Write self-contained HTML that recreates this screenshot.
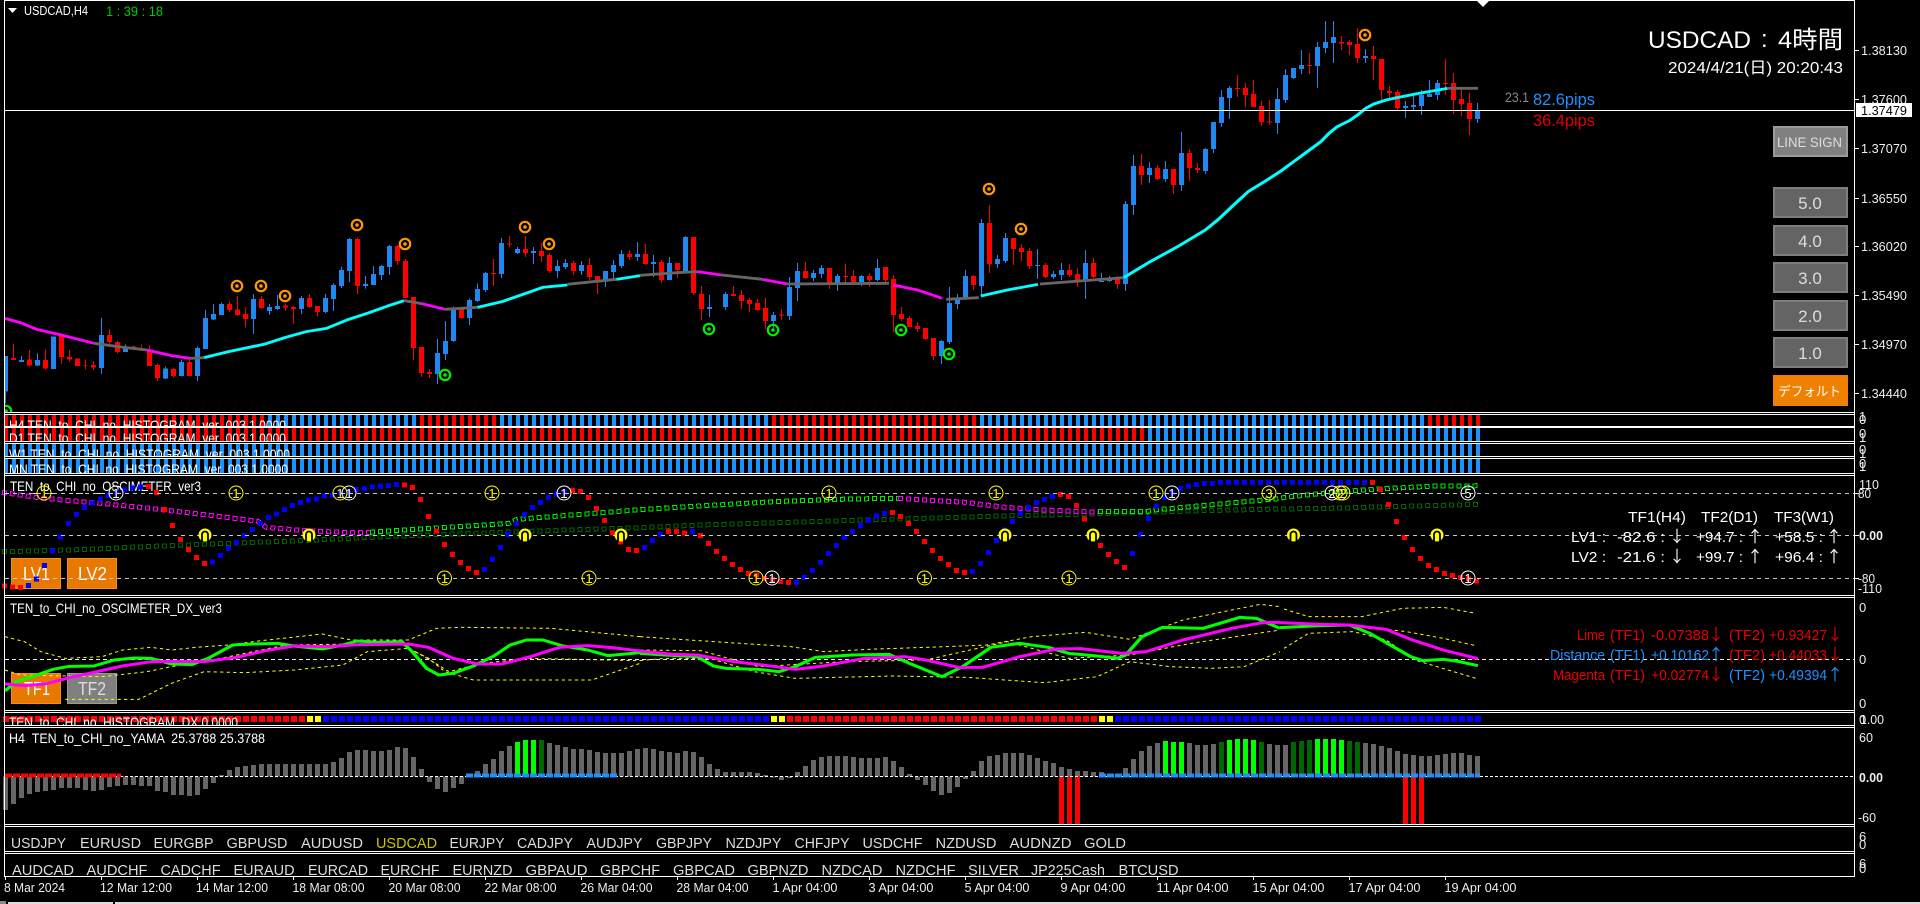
<!DOCTYPE html>
<html><head><meta charset="utf-8"><title>USDCAD H4</title>
<style>
html,body{margin:0;padding:0;background:#000;width:1920px;height:904px;overflow:hidden}
svg{display:block}
text{font-family:"Liberation Sans","Noto Sans CJK JP",sans-serif;fill:#fff;font-size:13px;white-space:pre}
.n{fill:none}
.c{shape-rendering:crispEdges;fill:none}
.sy{font-size:15px;fill:#ddd}
.big{font-size:15px}
.r{fill:#e80000;font-size:15px}
.b{fill:#1e90ff;font-size:15px}
.ar{font-size:16px;text-anchor:middle;font-family:"Noto Sans CJK JP",sans-serif}
.a{font-size:16px;text-anchor:middle;font-family:"Noto Sans CJK JP",sans-serif}
.ax{fill:#eee}
.y{fill:none;stroke:#ff0;stroke-width:3;stroke-dasharray:8 8}
.g{fill:none;stroke:#0f0;stroke-width:9;stroke-linejoin:round}
.m{fill:none;stroke:#f0f;stroke-width:9;stroke-linejoin:round}
.l{fill:none;stroke-width:8.5;stroke-linejoin:round}
.d{font-size:13px;text-anchor:middle}
.bt{font-size:17px;text-anchor:middle;fill:#ddd}
.ho{fill:none;stroke-width:5;stroke-dasharray:5 3}
.hi{fill:none;stroke:#000;stroke-width:3;stroke-dasharray:3 5;stroke-dashoffset:-1}
</style></head><body>
<svg xmlns="http://www.w3.org/2000/svg" width="1920" height="904" viewBox="0 0 1920 904">
<defs>
<clipPath id="cm"><rect x="5" y="1" width="1849" height="411"/></clipPath>
<clipPath id="c1"><rect x="5" y="415" width="1849" height="11"/></clipPath>
<clipPath id="c2"><rect x="5" y="428" width="1849" height="13"/></clipPath>
<clipPath id="c3"><rect x="5" y="444" width="1849" height="12"/></clipPath>
<clipPath id="c4"><rect x="5" y="459" width="1849" height="14"/></clipPath>
<clipPath id="c5"><rect x="5" y="713" width="1849" height="12"/></clipPath>
<g id="o"><circle r="5.200" fill="none" stroke="#f90" stroke-width="2.200"/><circle r="1.800" fill="#f90"/></g>
<g id="e"><circle r="5.200" fill="none" stroke="#0e0" stroke-width="2.200"/><circle r="1.800" fill="#0e0"/></g>
<g id="h"><circle r="6.500" fill="#ff0"/><path d="M-3 7V-.5a3 3 0 0 1 6 0V7" fill="none" stroke="#000" stroke-width="1.800"/></g>
</defs>

<!-- Candles -->
<g clip-path="url(#cm)">
<g class="c" transform="translate(.5 0) scale(1 .33333)">
<path stroke="#1e88f0" stroke-width="1" d="M5 1068V1210M21 1068V1086M37 1060V1098M53 1010V1108M101 954V1122M125 1033V1056M165 1100V1137M181 1080V1130M197 1040V1143M205 930V1047M213 912V960M221 908V945M253 882V1002M269 912V945M277 885V930M301 888V942M325 882V939M333 850V933M341 800V864M349 714V846M365 828V866M373 798V855M381 795V840M389 735V825M437 1017V1152M445 963V1080M453 920V1026M469 896V975M477 850V906M485 816V876M501 714V834M517 741V762M533 741V792M557 780V834M565 777V807M581 783V825M605 813V861M613 780V840M621 750V804M637 726V783M653 765V831M669 771V840M685 708V813M709 885V951M725 876V930M773 936V990M789 831V960M797 789V903M813 810V843M821 795V834M837 822V873M861 825V858M877 777V843M941 1020V1092M949 861V1032M957 882V927M965 810V897M981 657V888M997 765V804M1005 699V789M1037 747V837M1053 813V837M1061 789V840M1085 750V897M1101 819V846M1109 828V846M1125 603V873M1133 465V645M1149 486V549M1165 483V546M1181 396V573M1205 444V522M1213 366V459M1221 270V381M1229 258V357M1277 264V402M1285 207V309M1293 204V237M1301 150V222M1317 126V264M1325 63V159M1333 63V189M1365 147V189M1405 303V354M1413 288V333M1421 270V345M1429 240V291M1437 240V300M1477 309V369"/>
<path stroke="#1e88f0" stroke-width="5" d="M5 1068V1175M21 1080V1086M37 1080V1096M53 1010V1107M101 1005V1104M125 1040V1056M165 1106V1135M181 1086V1128M197 1044V1128M205 954V1047M213 942V958M221 912V945M253 897V957M269 921V933M277 918V927M301 894V927M325 894V936M333 855V897M341 810V858M349 717V813M365 852V858M373 822V855M381 798V825M389 738V801M437 1059V1122M445 1023V1062M453 924V1023M469 900V954M477 867V903M485 819V870M501 729V822M517 747V759M533 753V759M557 798V813M565 789V801M581 795V813M605 813V840M613 795V816M621 762V798M637 762V771M653 786V792M669 789V840M685 711V813M709 921V927M725 882V921M773 945V963M789 861V948M797 813V864M813 819V834M821 804V822M837 828V852M861 828V846M877 804V840M941 1023V1068M949 909V1026M957 894V912M965 828V897M981 669V858M997 777V792M1005 714V783M1037 795V798M1053 822V831M1061 810V825M1085 789V840M1101 843V846M1109 834V843M1125 612V852M1133 498V615M1149 504V525M1165 507V537M1181 459V555M1205 447V513M1213 366V447M1221 291V369M1229 264V294M1277 297V369M1285 225V300M1293 204V234M1301 195V207M1317 141V198M1325 126V144M1333 111V129M1365 168V174M1405 318V324M1413 315V321M1421 285V318M1429 282V291M1437 249V285M1477 330V357"/>
<path stroke="#f00" stroke-width="1" d="M13 1032V1080M29 1050V1100M45 1048V1110M61 1000V1092M69 1050V1085M85 1078V1108M93 1083V1110M109 988V1040M117 1022V1060M133 1036V1050M141 1033V1052M149 1035V1098M157 1090V1143M173 1103V1132M189 1076V1130M229 905V936M237 888V948M245 924V982M261 888V927M285 910V933M293 918V972M309 882V924M317 918V950M357 712V882M397 735V795M405 777V894M413 891V1080M421 1041V1131M429 1107V1134M461 921V957M493 777V858M509 708V741M525 708V771M541 729V786M549 759V819M573 783V825M589 774V840M597 828V882M629 750V780M645 732V795M661 780V849M677 789V834M693 711V885M701 858V960M733 858V890M741 870V927M749 894V936M757 897V933M765 894V987M781 927V960M805 786V837M829 804V867M845 792V852M853 810V852M869 819V861M885 801V855M893 825V996M901 921V963M909 948V981M917 966V996M925 984V1020M933 1014V1080M973 825V870M989 615V819M1013 714V795M1021 732V783M1029 744V807M1045 789V834M1069 792V831M1077 804V861M1093 774V834M1117 828V867M1141 462V555M1157 495V540M1173 507V582M1189 447V543M1197 489V519M1237 225V291M1245 249V321M1253 240V321M1261 303V378M1269 300V375M1309 159V222M1341 108V150M1349 120V165M1357 84V189M1373 138V240M1381 177V300M1389 258V294M1397 270V333M1445 177V285M1453 219V342M1461 264V348M1469 279V405"/>
<path stroke="#f00" stroke-width="5" d="M13 1074V1080M29 1078V1096M45 1080V1106M61 1008V1071M69 1071V1078M77 1075V1098M85 1096V1098M93 1095V1103M109 1005V1026M117 1026V1056M133 1040V1046M141 1045V1050M149 1050V1098M157 1095V1134M173 1107V1128M189 1086V1128M229 912V930M237 928V945M245 942V957M261 897V924M285 917V923M293 921V927M309 894V921M317 918V936M357 717V858M397 738V783M405 783V894M413 891V1044M421 1041V1119M429 1116V1122M461 921V954M493 819V822M509 730V733M525 747V759M541 753V768M549 765V813M573 789V813M589 795V831M597 828V840M629 762V771M645 762V792M661 786V840M677 789V810M693 711V879M701 882V927M733 882V888M741 885V903M749 900V912M757 909V930M765 924V963M781 944V947M805 813V834M829 804V852M845 828V831M853 828V846M869 828V840M885 801V840M893 837V945M901 942V957M909 954V981M917 978V987M925 984V1017M933 1014V1068M973 828V855M989 669V792M1013 714V747M1021 744V756M1029 753V798M1045 795V831M1069 810V825M1077 822V840M1093 789V831M1117 831V852M1141 498V525M1157 504V537M1173 507V555M1189 459V504M1197 504V510M1237 264V267M1245 264V285M1253 282V321M1261 318V366M1269 364V367M1309 195V198M1341 126V131M1349 126V135M1357 132V174M1373 168V177M1381 177V270M1389 273V279M1397 276V324M1445 249V252M1453 249V300M1461 297V312M1469 309V357"/>
</g>
<!-- Moving average -->
<g transform="scale(.40816 .33333)">
<path class="l" stroke="#f0f" d="M12 955L50 968L90 988L150 1005L230 1030"/>
<path class="l" stroke="#666" d="M230 1030L290 1040L360 1050"/>
<path class="l" stroke="#f0f" d="M360 1050L420 1067L465 1075"/>
<path class="l" stroke="#666" d="M465 1075L500 1073"/>
<path class="l" stroke="#0ff" d="M500 1073L560 1055L650 1032L700 1012L750 995L800 985L850 960L900 940L950 918L990 902"/>
<path class="l" stroke="#666" d="M990 902L1030 910"/>
<path class="l" stroke="#f0f" d="M1030 910L1090 928"/>
<path class="l" stroke="#666" d="M1090 928L1170 922"/>
<path class="l" stroke="#0ff" d="M1170 922L1230 905L1300 875L1330 862L1390 855"/>
<path class="l" stroke="#666" d="M1390 853L1510 838"/>
<path class="l" stroke="#0ff" d="M1510 838L1568 827"/>
</g>
<g transform="translate(640 0) scale(.40816 .33333)">
<path class="l" stroke="#666" d="M0 826L90 818L140 815"/>
<path class="l" stroke="#f0f" d="M140 815L200 825"/>
<path class="l" stroke="#666" d="M200 825L300 838"/>
<path class="l" stroke="#f0f" d="M300 838L360 852"/>
<path class="l" stroke="#666" d="M360 852L610 850"/>
<path class="l" stroke="#f0f" d="M620 855L680 870L740 895"/>
<path class="l" stroke="#666" d="M750 898L830 893"/>
<path class="l" stroke="#0ff" d="M835 888L900 870L975 853"/>
<path class="l" stroke="#666" d="M980 852L1185 833"/>
<path class="l" stroke="#0ff" d="M1185 833L1250 785L1320 738L1385 690L1420 655L1450 620L1490 575L1530 545L1568 515"/>
</g>
<g transform="translate(1280 0) scale(.40816 .33333)">
<path class="l" stroke="#0ff" d="M0 515L50 470L100 425L120 400L140 380L170 362L190 345L210 325L230 312L260 300L290 292L340 280L410 265"/>
<path class="l" stroke="#666" d="M410 265L485 265"/>
</g>
<!-- signal rings -->
<use href="#o" x="237" y="286"/><use href="#o" x="261" y="286"/><use href="#o" x="285" y="296"/><use href="#o" x="357" y="225"/><use href="#o" x="405" y="244"/><use href="#o" x="525" y="227"/><use href="#o" x="549" y="244"/><use href="#o" x="989" y="189"/><use href="#o" x="1021" y="229"/><use href="#o" x="1365" y="35"/>
<use href="#e" x="445" y="375"/><use href="#e" x="6" y="411"/><use href="#e" x="709" y="329"/><use href="#e" x="773" y="330"/><use href="#e" x="901" y="330"/><use href="#e" x="949" y="354"/>
<path class="c" stroke="#fff" d="M5 110.500H1854"/>
<path d="M1477 1H1489L1483 7Z" fill="#fff"/>
</g>

<!-- Main chart labels -->
<path d="M8 8H17L12.500 13Z" fill="#fff"/>
<text x="24" y="15" textLength="64" lengthAdjust="spacingAndGlyphs">USDCAD,H4</text>
<text x="106" y="16" textLength="57" lengthAdjust="spacingAndGlyphs" style="fill:#0c0;font-size:14px">1 : 39 : 18</text>
<text x="1648" y="48" textLength="103" lengthAdjust="spacingAndGlyphs" style="font-size:24px">USDCAD</text>
<text x="1761" y="47" style="font-size:24px">:</text>
<text x="1778" y="48" textLength="65" lengthAdjust="spacingAndGlyphs" style="font-size:24px">4時間</text>
<text x="1668" y="73" textLength="175" lengthAdjust="spacingAndGlyphs" style="font-size:16px">2024/4/21(日) 20:20:43</text>
<text x="1505" y="102" textLength="24" lengthAdjust="spacingAndGlyphs" style="fill:#888;font-size:14px">23.1</text>
<text x="1533" y="105" textLength="62" lengthAdjust="spacingAndGlyphs" style="fill:#1e90ff;font-size:17px">82.6pips</text>
<text x="1533" y="126" textLength="62" lengthAdjust="spacingAndGlyphs" style="fill:#e00000;font-size:17px">36.4pips</text>

<!-- Buttons -->
<g class="c" style="fill:none">
<rect x="1773" y="126" width="75" height="31" fill="#9a9a9a"/><rect x="1775" y="128" width="71" height="27" fill="#808080"/>
<rect x="1773" y="187" width="75" height="31" fill="#7e7e7e"/><rect x="1775" y="189" width="71" height="27" fill="#646464"/>
<rect x="1773" y="225" width="75" height="31" fill="#7e7e7e"/><rect x="1775" y="227" width="71" height="27" fill="#646464"/>
<rect x="1773" y="262" width="75" height="31" fill="#7e7e7e"/><rect x="1775" y="264" width="71" height="27" fill="#646464"/>
<rect x="1773" y="300" width="75" height="31" fill="#7e7e7e"/><rect x="1775" y="302" width="71" height="27" fill="#646464"/>
<rect x="1773" y="337" width="75" height="31" fill="#7e7e7e"/><rect x="1775" y="339" width="71" height="27" fill="#646464"/>
<rect x="1773" y="375" width="75" height="31" fill="#f08000"/>
</g>
<text x="1777" y="147" textLength="65" lengthAdjust="spacingAndGlyphs" style="fill:#ddd;font-size:14px">LINE SIGN</text>
<text x="1810" y="209" class="bt">5.0</text><text x="1810" y="247" class="bt">4.0</text><text x="1810" y="284" class="bt">3.0</text><text x="1810" y="322" class="bt">2.0</text><text x="1810" y="359" class="bt">1.0</text>
<text x="1778" y="396" textLength="63" lengthAdjust="spacingAndGlyphs" style="fill:#fff;font-size:13px">デフォルト</text>

<!-- Histogram rows -->
<g class="c" stroke-dasharray="4 4">
<g stroke-width="11">
<path stroke="#f00" d="M4 420.500H268M420 420.500H500M772 420.500H980M1428 420.500H1484"/>
<path stroke="#1e90ff" d="M268 420.500H420M500 420.500H772M980 420.500H1428"/>
</g>
<g stroke-width="13">
<path stroke="#f00" d="M4 434.500H1148"/>
<path stroke="#1e90ff" d="M1148 434.500H1484"/>
</g>
<path stroke="#1e90ff" stroke-width="12" d="M4 450H1484"/>
<path stroke="#1e90ff" stroke-width="14" d="M4 466H1484"/>
</g>
<g clip-path="url(#c1)"><text x="9" y="430" textLength="277" lengthAdjust="spacingAndGlyphs" style="font-size:14px">H4 TEN_to_CHI_no_HISTOGRAM_ver_003 1.0000</text></g>
<g clip-path="url(#c2)"><text x="9" y="443" textLength="277" lengthAdjust="spacingAndGlyphs" style="font-size:14px">D1 TEN_to_CHI_no_HISTOGRAM_ver_003 1.0000</text></g>
<g clip-path="url(#c3)"><text x="9" y="459" textLength="281" lengthAdjust="spacingAndGlyphs" style="font-size:14px">W1 TEN_to_CHI_no_HISTOGRAM_ver_003 1.0000</text></g>
<g clip-path="url(#c4)"><text x="9" y="474" textLength="279" lengthAdjust="spacingAndGlyphs" style="font-size:14px">MN TEN_to_CHI_no_HISTOGRAM_ver_003 1.0000</text></g>

<!-- Oscimeter panel -->
<rect x="11" y="558" width="50" height="31" style="fill:#f59020" class="c"/><rect x="12" y="559" width="48" height="29" style="fill:#e87800" class="c"/>
<rect x="67" y="558" width="50" height="31" style="fill:#f59020" class="c"/><rect x="68" y="559" width="48" height="29" style="fill:#e87800" class="c"/>
<text x="23" y="580" textLength="27" lengthAdjust="spacingAndGlyphs" style="font-size:18px">LV1</text>
<text x="78" y="580" textLength="29" lengthAdjust="spacingAndGlyphs" style="font-size:18px">LV2</text>
<text x="10" y="491" textLength="191" lengthAdjust="spacingAndGlyphs" style="font-size:14px">TEN_to_CHI_no_OSCIMETER_ver3</text>
<g class="c">
<path class="ho" stroke="#060" d="M2 551.700L45 550.700L90 549.300L130 547.300L210 544L300 540.700L400 536L490 532.700L560 530.300L640 527.700L700 525L800 522L900 519L1000 516L1100 513.700L1200 510.700L1280 509L1330 508.300L1480 504.300"/>
<path class="hi" d="M2 551.700L45 550.700L90 549.300L130 547.300L210 544L300 540.700L400 536L490 532.700L560 530.300L640 527.700L700 525L800 522L900 519L1000 516L1100 513.700L1200 510.700L1280 509L1330 508.300L1480 504.300"/>
<path class="ho" stroke="#f0f" d="M2 492.300L40 498L100 503.300L150 508.300L210 515.300L258 521.300L266 527.300L300 530.300L340 532.300L370 532.700"/>
<path class="hi" d="M2 492.300L40 498L100 503.300L150 508.300L210 515.300L258 521.300L266 527.300L300 530.300L340 532.300L370 532.700"/>
<path class="ho" stroke="#0e0" d="M370 532.300L509 523.300L517 519.300L645 509.300L773 501.700L850 499L898 498.300"/>
<path class="hi" d="M370 532.300L509 523.300L517 519.300L645 509.300L773 501.700L850 499L898 498.300"/>
<path class="ho" stroke="#f0f" d="M898 498.300L965 502.300L1005 507.300L1045 510L1098 512.300"/>
<path class="hi" d="M898 498.300L965 502.300L1005 507.300L1045 510L1098 512.300"/>
<path class="ho" stroke="#0e0" d="M1098 511.700L1146 511.700L1154 510L1278 498.700L1285 497.300L1333 492.300L1373 489.300L1429 486.300L1480 485.700"/>
<path class="hi" d="M1098 511.700L1146 511.700L1154 510L1278 498.700L1285 497.300L1333 492.300L1373 489.300L1429 486.300L1480 485.700"/>
</g>
<g class="c" transform="translate(-.5 410) scale(1 .33333)">
<path stroke="#00f" stroke-width="5" d="M29 519v15M37 499v15M45 459v15M53 415v15M61 373v15M69 333v15M77 306v15M85 285v15M93 271v15M101 260v15M109 249v15M117 239v15M125 233v15M133 227v15M141 223v15M213 448v15M221 429v15M229 408v15M237 390v15M245 369v15M253 351v15M261 333v15M269 315v15M277 304v15M285 291v15M293 279v15M301 270v15M309 263v15M317 259v15M325 251v15M333 247v15M341 240v15M349 238v15M357 231v15M365 228v15M373 223v15M381 220v15M389 219v15M397 216v15M485 471v15M493 441v15M501 405v15M509 366v15M517 333v15M525 306v15M533 285v15M541 270v15M549 255v15M557 245v15M565 238v15M645 405v15M653 384v15M661 366v15M693 357v15M797 510v15M805 495v15M813 474v15M821 450v15M829 423v15M837 399v15M845 375v15M853 357v15M861 339v15M869 324v15M877 311v15M885 303v15M973 477v15M981 453v15M989 420v15M997 384v15M1005 353v15M1013 327v15M1021 303v15M1029 285v15M1037 270v15M1045 261v15M1053 252v15M1133 423v15M1141 366v15M1149 318v15M1157 281v15M1165 255v15M1173 240v15M1181 228v15M1189 221v15M1197 216v15M1205 213v15M1213 213v15"/>
<path stroke="#00f" stroke-width="15" stroke-dasharray="5 3" d="M1218.500 217H1368"/>
<path stroke="#f00" stroke-width="5" d="M5 520v15M13 523v15M21 525v15M149 222v15M157 240v15M165 291v15M173 339v15M181 381v15M189 411v15M197 435v15M205 453v15M405 217v15M413 225v15M421 261v15M429 312v15M437 356v15M445 396v15M453 426v15M461 450v15M469 468v15M477 480v15M573 234v15M581 237v15M589 255v15M597 288v15M605 324v15M613 362v15M621 388v15M629 411v15M637 414v15M669 357v15M677 357v15M685 362v15M701 369v15M709 393v15M717 417v15M725 438v15M733 456v15M741 471v15M749 483v15M757 488v15M765 498v15M773 501v15M781 507v15M789 510v15M893 300v15M901 312v15M909 333v15M917 357v15M925 387v15M933 414v15M941 438v15M949 456v15M957 474v15M965 480v15M1061 246v15M1069 252v15M1077 279v15M1085 320v15M1093 362v15M1101 399v15M1109 426v15M1117 447v15M1125 465v15M1373 210v15M1381 231v15M1389 276v15M1397 327v15M1405 375v15M1413 411v15M1421 438v15M1429 459v15M1437 471v15M1445 483v15M1453 489v15M1461 495v15M1469 500v15M1477 506v15"/>
</g>
<path class="c" stroke="#c8c8c8" stroke-dasharray="4 4" d="M5 493.500H1854M5 535.500H1854M5 578.500H1854"/>
<g fill="none" stroke="#ff0">
<circle cx="44" cy="493" r="7"/><circle cx="236" cy="493" r="7"/><circle cx="340" cy="493" r="7"/><circle cx="492" cy="493" r="7"/><circle cx="829" cy="493" r="7"/><circle cx="996" cy="493" r="7"/><circle cx="1156" cy="493" r="7"/><circle cx="1269" cy="493" r="7"/><circle cx="1340" cy="493" r="7"/><circle cx="1343" cy="493" r="7"/><circle cx="444.500" cy="578" r="7"/><circle cx="589" cy="578" r="7"/><circle cx="756" cy="578" r="7"/><circle cx="924.500" cy="578" r="7"/><circle cx="1069" cy="578" r="7"/>
</g>
<g fill="none" stroke="#fff">
<circle cx="116" cy="493" r="7"/><circle cx="349" cy="493" r="7"/><circle cx="564" cy="493" r="7"/><circle cx="1172" cy="493" r="7"/><circle cx="1332" cy="493" r="7"/><circle cx="1468" cy="493" r="7"/><circle cx="772" cy="578" r="7"/><circle cx="1468" cy="578" r="7"/>
</g>
<g>
<text class="d" x="44" y="498" style="fill:#ff0">1</text><text class="d" x="236" y="498" style="fill:#ff0">1</text><text class="d" x="340" y="498" style="fill:#ff0">1</text><text class="d" x="492" y="498" style="fill:#ff0">1</text><text class="d" x="829" y="498" style="fill:#ff0">1</text><text class="d" x="996" y="498" style="fill:#ff0">1</text><text class="d" x="1156" y="498" style="fill:#ff0">1</text><text class="d" x="1269" y="498" style="fill:#ff0">3</text><text class="d" x="1340" y="498" style="fill:#ff0">2</text><text class="d" x="1343" y="498" style="fill:#ff0">2</text><text class="d" x="444.500" y="583" style="fill:#ff0">1</text><text class="d" x="589" y="583" style="fill:#ff0">1</text><text class="d" x="756" y="583" style="fill:#ff0">1</text><text class="d" x="924.500" y="583" style="fill:#ff0">1</text><text class="d" x="1069" y="583" style="fill:#ff0">1</text>
</g>
<text class="d" x="116" y="498">1</text><text class="d" x="349" y="498">1</text><text class="d" x="564" y="498">1</text><text class="d" x="1172" y="498">1</text><text class="d" x="1332" y="498">2</text><text class="d" x="1468" y="498">5</text><text class="d" x="772" y="583">1</text><text class="d" x="1468" y="583">1</text>
<use href="#h" x="205" y="535"/><use href="#h" x="309" y="535"/><use href="#h" x="525" y="535"/><use href="#h" x="621" y="535"/><use href="#h" x="1005" y="535"/><use href="#h" x="1093" y="535"/><use href="#h" x="1293.500" y="535"/><use href="#h" x="1437" y="535"/>

<!-- TF table -->
<text class="big" x="1628" y="522" textLength="58" lengthAdjust="spacingAndGlyphs">TF1(H4)</text>
<text class="big" x="1701" y="522" textLength="57" lengthAdjust="spacingAndGlyphs">TF2(D1)</text>
<text class="big" x="1774" y="522" textLength="60" lengthAdjust="spacingAndGlyphs">TF3(W1)</text>
<text class="big" x="1571" y="542" textLength="35" lengthAdjust="spacingAndGlyphs">LV1 :</text>
<text class="big" x="1617" y="542" textLength="48" lengthAdjust="spacingAndGlyphs">-82.6 :</text>
<text class="big" x="1696" y="542" textLength="47" lengthAdjust="spacingAndGlyphs">+94.7 :</text>
<text class="big" x="1775" y="542" textLength="48" lengthAdjust="spacingAndGlyphs">+58.5 :</text>
<text class="ar" x="1677" y="542">↓</text><text class="ar" x="1755" y="542">↑</text><text class="ar" x="1834" y="542">↑</text>
<text class="big" x="1571" y="562" textLength="35" lengthAdjust="spacingAndGlyphs">LV2 :</text>
<text class="big" x="1617" y="562" textLength="48" lengthAdjust="spacingAndGlyphs">-21.6 :</text>
<text class="big" x="1696" y="562" textLength="47" lengthAdjust="spacingAndGlyphs">+99.7 :</text>
<text class="big" x="1775" y="562" textLength="48" lengthAdjust="spacingAndGlyphs">+96.4 :</text>
<text class="ar" x="1677" y="562">↓</text><text class="ar" x="1755" y="562">↑</text><text class="ar" x="1834" y="562">↑</text>

<!-- DX panel -->
<rect x="11" y="673" width="50" height="31" style="fill:#f59020" class="c"/><rect x="12" y="674" width="48" height="29" style="fill:#e87800" class="c"/>
<rect x="67" y="673" width="50" height="31" style="fill:#9a9a9a" class="c"/><rect x="68" y="674" width="48" height="29" style="fill:#808080" class="c"/>
<text x="24" y="695" textLength="26" lengthAdjust="spacingAndGlyphs" style="font-size:18px">TF1</text>
<text x="78" y="695" textLength="28" lengthAdjust="spacingAndGlyphs" style="font-size:18px;fill:#ddd">TF2</text>
<text x="10" y="613" textLength="212" lengthAdjust="spacingAndGlyphs" style="font-size:14px">TEN_to_CHI_no_OSCIMETER_DX_ver3</text>
<path class="c" stroke="#eee" stroke-dasharray="4 3" d="M5 659.500H1854"/>
<g transform="translate(0 410) scale(.40816 .33333)">
<path class="y" d="M12 680L60 695L100 725L160 745L250 740L300 720L370 712L420 720L480 712L560 705L640 692L790 672L860 690L1000 690L1070 655L1130 652L1350 655L1568 680"/>
<path class="y" d="M160 868L340 868L420 820L500 785L600 788L720 780L840 765L900 725L1000 715L1050 745L1090 785L1160 810L1450 810L1568 760"/>
<path class="y" d="M12 780L50 795L250 800L360 785L440 765L520 750L700 705L980 700L1040 740L1100 785L1180 760L1300 745L1568 752"/>
<path class="g" d="M12 843L40 815L90 795L130 778L170 769L230 768L280 750L330 744L370 745L420 762L470 764L510 745L570 705L620 702L680 700L720 708L790 717L840 705L875 693L930 697L985 695L1010 725L1045 775L1075 795L1110 790L1160 768L1210 738L1250 705L1290 690L1330 690L1380 708L1440 720L1490 737L1568 728"/>
<path class="m" d="M12 822L60 827L110 822L170 803L230 787L300 768L370 755L430 754L500 755L580 742L650 722L720 708L800 710L880 704L1000 702L1050 712L1110 745L1170 762L1230 762L1300 740L1370 712L1440 707L1500 713L1568 723"/>
</g>
<g transform="translate(640 410) scale(.40816 .33333)">
<path class="y" d="M0 680L120 690L370 710L450 725L560 718L700 712L850 705L960 680L1090 667L1200 688L1330 630L1450 600L1520 583L1568 590"/>
<path class="y" d="M0 752L60 745L170 745L280 785L380 805L620 798L800 802L990 818L1120 800L1200 755L1300 770L1400 775L1480 770L1568 725"/>
<path class="y" d="M0 720L150 722L290 770L500 755L700 750L900 695L1050 745L1200 735L1350 700L1568 660"/>
<path class="g" d="M0 730L60 735L140 740L180 768L210 775L290 778L340 785L380 770L430 742L520 735L610 733L660 760L740 800L790 770L860 712L930 700L1000 712L1050 730L1120 738L1170 745L1190 735L1230 680L1280 652L1380 655L1470 622L1510 625L1568 655"/>
<path class="m" d="M0 723L80 733L140 735L230 755L300 765L380 778L450 768L550 745L650 740L700 750L780 772L840 772L930 740L1020 717L1080 716L1180 730L1240 725L1330 690L1450 655L1530 637L1568 637"/>
</g>
<g transform="translate(1280 410) scale(.40816 .33333)">
<path class="y" d="M10 597L70 620L200 620L300 595L400 592L480 610"/>
<path class="y" d="M10 715L70 670L180 665L260 690L330 750L480 805"/>
<path class="y" d="M170 645L310 665L400 685L480 707"/>
<path class="g" d="M0 653L100 647L170 645L220 670L270 705L320 740L350 752L400 748L440 755L485 767"/>
<path class="m" d="M0 638L100 643L170 645L260 658L320 688L400 720L485 746"/>
</g>
<text class="r" x="1577" y="640" textLength="28" lengthAdjust="spacingAndGlyphs">Lime</text>
<text class="r" x="1610" y="640" textLength="35" lengthAdjust="spacingAndGlyphs">(TF1)</text>
<text class="r" x="1651" y="640" textLength="58" lengthAdjust="spacingAndGlyphs">-0.07388</text>
<text class="r a" x="1716" y="640">↓</text>
<text class="r" x="1729" y="640" textLength="36" lengthAdjust="spacingAndGlyphs">(TF2)</text>
<text class="r" x="1769" y="640" textLength="58" lengthAdjust="spacingAndGlyphs">+0.93427</text>
<text class="r a" x="1835" y="640">↓</text>
<text class="b" x="1550" y="660" textLength="55" lengthAdjust="spacingAndGlyphs">Distance</text>
<text class="b" x="1610" y="660" textLength="35" lengthAdjust="spacingAndGlyphs">(TF1)</text>
<text class="b" x="1651" y="660" textLength="58" lengthAdjust="spacingAndGlyphs">+0.10162</text>
<text class="b a" x="1716" y="660">↑</text>
<text class="r" x="1729" y="660" textLength="36" lengthAdjust="spacingAndGlyphs">(TF2)</text>
<text class="r" x="1769" y="660" textLength="58" lengthAdjust="spacingAndGlyphs">+0.44033</text>
<text class="r a" x="1835" y="660">↓</text>
<text class="r" x="1553" y="680" textLength="52" lengthAdjust="spacingAndGlyphs">Magenta</text>
<text class="r" x="1610" y="680" textLength="35" lengthAdjust="spacingAndGlyphs">(TF1)</text>
<text class="r" x="1651" y="680" textLength="58" lengthAdjust="spacingAndGlyphs">+0.02774</text>
<text class="r a" x="1716" y="680">↓</text>
<text class="b" x="1729" y="680" textLength="36" lengthAdjust="spacingAndGlyphs">(TF2)</text>
<text class="b" x="1769" y="680" textLength="58" lengthAdjust="spacingAndGlyphs">+0.49394</text>
<text class="b a" x="1835" y="680">↑</text>

<!-- DX histogram row -->
<g class="c" stroke-width="6" stroke-dasharray="6 2">
<path stroke="#f00" d="M3 719H307M787 719H1099"/>
<path stroke="#ff0" d="M307 719H323M771 719H787M1099 719H1115"/>
<path stroke="#00f" d="M323 719H771M1115 719H1483"/>
</g>
<g clip-path="url(#c5)"><text x="9" y="727" textLength="229" lengthAdjust="spacingAndGlyphs" style="font-size:14px">TEN_to_CHI_no_HISTOGRAM_DX 0.0000</text></g>

<!-- YAMA -->
<text x="9" y="743" textLength="256" lengthAdjust="spacingAndGlyphs" style="font-size:14px">H4  TEN_to_CHI_no_YAMA  25.3788 25.3788</text>
<g class="c" transform="translate(.5 410) scale(1 .33333)" stroke-width="5">
<path stroke="#666" d="M5 1099V1200M13 1099V1182M21 1099V1164M29 1099V1152M37 1099V1146M45 1099V1143M53 1099V1140M61 1099V1134M69 1099V1134M77 1099V1134M85 1099V1140M93 1099V1143M101 1099V1140M109 1099V1131M117 1099V1128M125 1099V1125M133 1099V1125M141 1099V1128M149 1099V1128M157 1099V1143M165 1099V1146M173 1099V1155M181 1099V1155M189 1099V1158M197 1099V1155M205 1099V1137M213 1099V1119M221 1099V1095M229 1099V1080M237 1099V1071M245 1099V1068M253 1099V1065M261 1099V1062M269 1099V1062M277 1099V1062M285 1099V1062M293 1099V1062M301 1099V1062M309 1099V1062M317 1099V1062M325 1099V1062M333 1099V1056M341 1099V1044M349 1099V1026M357 1099V1020M365 1099V1020M373 1099V1023M381 1099V1023M389 1099V1020M397 1099V1011M405 1099V1014M413 1099V1041M421 1099V1077M429 1099V1116M437 1099V1137M445 1099V1146M453 1099V1134M461 1099V1122M469 1099V1092M477 1099V1083M485 1099V1062M493 1099V1047M501 1099V1023M509 1099V1008M549 1099V999M557 1099V1005M565 1099V1011M573 1099V1017M581 1099V1017M589 1099V1020M597 1099V1026M605 1099V1029M613 1099V1029M621 1099V1029M629 1099V1023M637 1099V1017M645 1099V1014M653 1099V1017M661 1099V1023M669 1099V1026M677 1099V1029M685 1099V1023M693 1099V1026M701 1099V1041M709 1099V1062M717 1099V1077M725 1099V1086M733 1099V1086M741 1099V1086M749 1099V1086M757 1099V1089M765 1099V1095M773 1099V1102M781 1099V1110M789 1099V1104M797 1099V1086M805 1099V1068M813 1099V1050M821 1099V1041M829 1099V1038M837 1099V1038M845 1099V1038M853 1099V1041M861 1099V1044M869 1099V1044M877 1099V1044M885 1099V1041M893 1099V1053M901 1099V1071M909 1099V1092M917 1099V1110M925 1099V1125M933 1099V1143M941 1099V1155M949 1099V1149M957 1099V1131M965 1099V1107M973 1099V1083M981 1099V1053M989 1099V1038M997 1099V1035M1005 1099V1029M1013 1099V1029M1021 1099V1029M1029 1099V1035M1037 1099V1044M1045 1099V1053M1053 1099V1059M1061 1099V1071M1069 1099V1077M1077 1099V1083M1085 1099V1083M1093 1099V1086M1101 1099V1086M1109 1099V1090M1125 1099V1074M1133 1099V1047M1141 1099V1023M1149 1099V1008M1157 1099V999M1189 1099V999M1197 1099V1005M1205 1099V1005M1213 1099V1002M1269 1099V1002M1277 1099V1005M1285 1099V1005M1365 1099V999M1373 1099V1002M1381 1099V1008M1389 1099V1014M1397 1099V1023M1405 1099V1032M1413 1099V1035M1421 1099V1038M1429 1099V1038M1437 1099V1035M1445 1099V1032M1453 1099V1029M1461 1099V1029M1469 1099V1035M1477 1099V1038"/>
<path stroke="#0f0" d="M517 1099V996M525 1099V990M533 1099V990M1165 1099V993M1173 1099V996M1181 1099V996M1229 1099V990M1237 1099V987M1245 1099V987M1253 1099V990M1317 1099V987M1325 1099V987M1333 1099V987M1341 1099V990"/>
<path stroke="#060" d="M541 1099V990M1221 1099V996M1261 1099V996M1293 1099V996M1301 1099V993M1309 1099V990M1349 1099V993M1357 1099V996"/>
<path stroke="#f00" d="M1061 1099V1242M1069 1099V1242M1077 1099V1242M1405 1099V1242M1413 1099V1242M1421 1099V1242"/>
</g>
<path class="c" stroke="#fff" stroke-dasharray="3 2" d="M5 776.500H1854"/>
<g class="c" stroke-width="4" stroke-dasharray="7 1">
<path stroke="#f00" d="M5 775.500H121"/>
<path stroke="#1e90ff" d="M466 775.500H617M1099 775.500H1480"/>
</g>

<!-- Symbol rows -->
<text class="sy" x="11" y="848" textLength="55" lengthAdjust="spacingAndGlyphs">USDJPY</text>
<text class="sy" x="80" y="848" textLength="61" lengthAdjust="spacingAndGlyphs">EURUSD</text>
<text class="sy" x="153.500" y="848" textLength="60" lengthAdjust="spacingAndGlyphs">EURGBP</text>
<text class="sy" x="226.500" y="848" textLength="61" lengthAdjust="spacingAndGlyphs">GBPUSD</text>
<text class="sy" x="301" y="848" textLength="62" lengthAdjust="spacingAndGlyphs">AUDUSD</text>
<text class="sy" x="376" y="848" textLength="61" lengthAdjust="spacingAndGlyphs" style="fill:#c8c800">USDCAD</text>
<text class="sy" x="449.500" y="848" textLength="55" lengthAdjust="spacingAndGlyphs">EURJPY</text>
<text class="sy" x="517" y="848" textLength="56" lengthAdjust="spacingAndGlyphs">CADJPY</text>
<text class="sy" x="586.500" y="848" textLength="56" lengthAdjust="spacingAndGlyphs">AUDJPY</text>
<text class="sy" x="656" y="848" textLength="56" lengthAdjust="spacingAndGlyphs">GBPJPY</text>
<text class="sy" x="725.500" y="848" textLength="56" lengthAdjust="spacingAndGlyphs">NZDJPY</text>
<text class="sy" x="794.500" y="848" textLength="55" lengthAdjust="spacingAndGlyphs">CHFJPY</text>
<text class="sy" x="862.500" y="848" textLength="60" lengthAdjust="spacingAndGlyphs">USDCHF</text>
<text class="sy" x="935.500" y="848" textLength="61" lengthAdjust="spacingAndGlyphs">NZDUSD</text>
<text class="sy" x="1009.500" y="848" textLength="62" lengthAdjust="spacingAndGlyphs">AUDNZD</text>
<text class="sy" x="1084" y="848" textLength="42" lengthAdjust="spacingAndGlyphs">GOLD</text>
<text class="sy" x="12" y="875" textLength="62" lengthAdjust="spacingAndGlyphs">AUDCAD</text>
<text class="sy" x="86.500" y="875" textLength="61" lengthAdjust="spacingAndGlyphs">AUDCHF</text>
<text class="sy" x="160.500" y="875" textLength="60" lengthAdjust="spacingAndGlyphs">CADCHF</text>
<text class="sy" x="233.500" y="875" textLength="61" lengthAdjust="spacingAndGlyphs">EURAUD</text>
<text class="sy" x="308" y="875" textLength="60" lengthAdjust="spacingAndGlyphs">EURCAD</text>
<text class="sy" x="380.500" y="875" textLength="59" lengthAdjust="spacingAndGlyphs">EURCHF</text>
<text class="sy" x="452.500" y="875" textLength="60" lengthAdjust="spacingAndGlyphs">EURNZD</text>
<text class="sy" x="525.500" y="875" textLength="62" lengthAdjust="spacingAndGlyphs">GBPAUD</text>
<text class="sy" x="600" y="875" textLength="60" lengthAdjust="spacingAndGlyphs">GBPCHF</text>
<text class="sy" x="673" y="875" textLength="62" lengthAdjust="spacingAndGlyphs">GBPCAD</text>
<text class="sy" x="747.500" y="875" textLength="61" lengthAdjust="spacingAndGlyphs">GBPNZD</text>
<text class="sy" x="821.500" y="875" textLength="61" lengthAdjust="spacingAndGlyphs">NZDCAD</text>
<text class="sy" x="895.500" y="875" textLength="60" lengthAdjust="spacingAndGlyphs">NZDCHF</text>
<text class="sy" x="968" y="875" textLength="51" lengthAdjust="spacingAndGlyphs">SILVER</text>
<text class="sy" x="1031" y="875" textLength="74" lengthAdjust="spacingAndGlyphs">JP225Cash</text>
<text class="sy" x="1118.500" y="875" textLength="60" lengthAdjust="spacingAndGlyphs">BTCUSD</text>

<!-- Frame lines -->
<rect x="0" y="877" width="1920" height="25" style="fill:#000" class="c"/>
<path class="c" stroke="#fff" d="M4 .5H1854M4 412.500H1854M4 414.500H1854M4 426.500H1854M4 427.500H1854M4 441.500H1854M4 443.500H1854M4 456.500H1854M4 458.500H1854M4 473.500H1854M4 475.500H1854M4 595.500H1854M4 597.500H1854M4 710.500H1854M4 712.500H1854M4 725.500H1854M4 727.500H1854M4 824.500H1854M4 826.500H1854M4 851.500H1854M4 853.500H1854M4 876.500H1854M4.500 0V877M1854.500 0V877M5.500 877V880M101.500 877V880M197.500 877V880M293.500 877V880M389.500 877V880M485.500 877V880M581.500 877V880M677.500 877V880M773.500 877V880M869.500 877V880M965.500 877V880M1061.500 877V880M1157.500 877V880M1253.500 877V880M1349.500 877V880M1445.500 877V880M1855 50.500H1859M1855 99.500H1859M1855 148.500H1859M1855 198.500H1859M1855 246.500H1859M1855 295.500H1859M1855 344.500H1859M1855 393.500H1859M1855 493.500H1859M1855 535.500H1859M1855 578.500H1859"/>
<path class="c" stroke="#ddd" stroke-width="2" d="M8 903H113M115 903H1920"/>
<rect x="0" y="901" width="6" height="3" style="fill:#888" class="c"/>

<!-- Y axis -->
<text class="ax" x="1861" y="55" textLength="46" lengthAdjust="spacingAndGlyphs">1.38130</text>
<text class="ax" x="1861" y="104" textLength="46" lengthAdjust="spacingAndGlyphs">1.37600</text>
<text class="ax" x="1861" y="153" textLength="46" lengthAdjust="spacingAndGlyphs">1.37070</text>
<text class="ax" x="1861" y="203" textLength="46" lengthAdjust="spacingAndGlyphs">1.36550</text>
<text class="ax" x="1861" y="251" textLength="46" lengthAdjust="spacingAndGlyphs">1.36020</text>
<text class="ax" x="1861" y="300" textLength="46" lengthAdjust="spacingAndGlyphs">1.35490</text>
<text class="ax" x="1861" y="349" textLength="46" lengthAdjust="spacingAndGlyphs">1.34970</text>
<text class="ax" x="1861" y="398" textLength="46" lengthAdjust="spacingAndGlyphs">1.34440</text>
<rect x="1856" y="103" width="56" height="14" style="fill:#fff" class="c"/>
<text x="1861" y="115" textLength="46" lengthAdjust="spacingAndGlyphs" style="fill:#000">1.37479</text>
<text class="ax" x="1859" y="424">0</text><text class="ax" x="1859" y="421">1</text>
<text class="ax" x="1859" y="438">0</text><text class="ax" x="1859" y="442">1</text>
<text class="ax" x="1859" y="454">0</text><text class="ax" x="1859" y="458">1</text>
<text class="ax" x="1859" y="468">0</text><text class="ax" x="1859" y="471">1</text>
<text class="ax" x="1859" y="489" textLength="20" lengthAdjust="spacingAndGlyphs">110</text>
<text class="ax" x="1858" y="498" textLength="13" lengthAdjust="spacingAndGlyphs">80</text>
<text class="ax" x="1859" y="540" textLength="24" lengthAdjust="spacingAndGlyphs" style="font-weight:bold">0.00</text>
<text class="ax" x="1858" y="583" textLength="17" lengthAdjust="spacingAndGlyphs">-80</text>
<text class="ax" x="1858" y="593" textLength="24" lengthAdjust="spacingAndGlyphs">-110</text>
<text class="ax" x="1859" y="612">0</text><text class="ax" x="1859" y="664">0</text><text class="ax" x="1859" y="708">0</text>
<text class="ax" x="1859" y="724">0</text>
<text class="ax" x="1860" y="724" textLength="24" lengthAdjust="spacingAndGlyphs">1.00</text>
<text class="ax" x="1859" y="742" textLength="14" lengthAdjust="spacingAndGlyphs">60</text>
<text class="ax" x="1859" y="782" textLength="24" lengthAdjust="spacingAndGlyphs" style="font-weight:bold">0.00</text>
<text class="ax" x="1858" y="822" textLength="18" lengthAdjust="spacingAndGlyphs">-60</text>
<text class="ax" x="1859" y="841">6</text><text class="ax" x="1859" y="849">0</text>
<text class="ax" x="1859" y="868">6</text><text class="ax" x="1859" y="873">0</text>

<!-- Date axis -->
<text class="ax" x="4" y="892" textLength="61" lengthAdjust="spacingAndGlyphs">8 Mar 2024</text>
<text class="ax" x="100" y="892" textLength="72" lengthAdjust="spacingAndGlyphs">12 Mar 12:00</text>
<text class="ax" x="196" y="892" textLength="72" lengthAdjust="spacingAndGlyphs">14 Mar 12:00</text>
<text class="ax" x="292.500" y="892" textLength="72" lengthAdjust="spacingAndGlyphs">18 Mar 08:00</text>
<text class="ax" x="388.500" y="892" textLength="72" lengthAdjust="spacingAndGlyphs">20 Mar 08:00</text>
<text class="ax" x="484.500" y="892" textLength="72" lengthAdjust="spacingAndGlyphs">22 Mar 08:00</text>
<text class="ax" x="580.500" y="892" textLength="72" lengthAdjust="spacingAndGlyphs">26 Mar 04:00</text>
<text class="ax" x="676.500" y="892" textLength="72" lengthAdjust="spacingAndGlyphs">28 Mar 04:00</text>
<text class="ax" x="772.500" y="892" textLength="65" lengthAdjust="spacingAndGlyphs">1 Apr 04:00</text>
<text class="ax" x="868.500" y="892" textLength="65" lengthAdjust="spacingAndGlyphs">3 Apr 04:00</text>
<text class="ax" x="964.500" y="892" textLength="65" lengthAdjust="spacingAndGlyphs">5 Apr 04:00</text>
<text class="ax" x="1060.500" y="892" textLength="65" lengthAdjust="spacingAndGlyphs">9 Apr 04:00</text>
<text class="ax" x="1156.500" y="892" textLength="72" lengthAdjust="spacingAndGlyphs">11 Apr 04:00</text>
<text class="ax" x="1252.500" y="892" textLength="72" lengthAdjust="spacingAndGlyphs">15 Apr 04:00</text>
<text class="ax" x="1348.500" y="892" textLength="72" lengthAdjust="spacingAndGlyphs">17 Apr 04:00</text>
<text class="ax" x="1444.500" y="892" textLength="72" lengthAdjust="spacingAndGlyphs">19 Apr 04:00</text>
</svg>
</body></html>
